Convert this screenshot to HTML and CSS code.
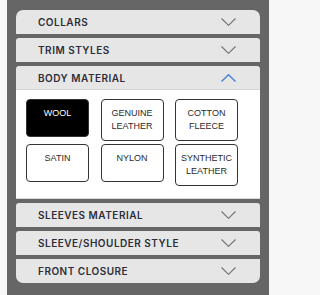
FILE: index.html
```html
<!DOCTYPE html>
<html>
<head>
<meta charset="utf-8">
<link rel="stylesheet" href="styles.css">
</head>
<body>
<div class="panel">
  <div class="acc">
    <div class="item first">
      <div class="head"><span class="title">COLLARS</span><svg class="chev" viewBox="0 0 15 8" width="15" height="8"><path d="M0.5 0.5 L7.5 7.3 L14.5 0.5"/></svg></div>
    </div>
    <div class="item">
      <div class="head"><span class="title">TRIM STYLES</span><svg class="chev" viewBox="0 0 15 8" width="15" height="8"><path d="M0.5 0.5 L7.5 7.3 L14.5 0.5"/></svg></div>
    </div>
    <div class="item open">
      <div class="head"><span class="title">BODY MATERIAL</span><svg class="chev up" viewBox="0 0 15 8" width="15" height="8"><path d="M0.5 7.5 L7.5 0.7 L14.5 7.5"/></svg></div>
      <div class="body">
        <div class="opts">
          <div class="opt sel">WOOL</div>
          <div class="opt">GENUINE<br>LEATHER</div>
          <div class="opt">COTTON<br>FLEECE</div>
          <div class="opt">SATIN</div>
          <div class="opt">NYLON</div>
          <div class="opt">SYNTHETIC<br>LEATHER</div>
        </div>
      </div>
    </div>
    <div class="item">
      <div class="head"><span class="title">SLEEVES MATERIAL</span><svg class="chev" viewBox="0 0 15 8" width="15" height="8"><path d="M0.5 0.5 L7.5 7.3 L14.5 0.5"/></svg></div>
    </div>
    <div class="item">
      <div class="head"><span class="title">SLEEVE/SHOULDER STYLE</span><svg class="chev" viewBox="0 0 15 8" width="15" height="8"><path d="M0.5 0.5 L7.5 7.3 L14.5 0.5"/></svg></div>
    </div>
    <div class="item last">
      <div class="head"><span class="title">FRONT CLOSURE</span><svg class="chev" viewBox="0 0 15 8" width="15" height="8"><path d="M0.5 0.5 L7.5 7.3 L14.5 0.5"/></svg></div>
    </div>
  </div>
</div>
</body>
</html>
```
FILE: styles.css
```css
html, body {
  margin: 0;
  padding: 0;
  background: #f7f7f7;
}
.panel {
  margin-left: 7px;
  width: 262px;
  height: 295px;
  box-sizing: border-box;
  background: #666666;
  padding: 10px 9px 0 9px;
}
.acc {
  display: flex;
  flex-direction: column;
  gap: 4px;
}
.item {
  background: #e6e6e6;
  border-radius: 3px 3px 0 0;
  overflow: hidden;
}
.item.first {
  border-radius: 7px 7px 0 0;
}
.item.last {
  border-radius: 0 0 7px 7px;
}
.head {
  height: 24px;
  display: flex;
  align-items: center;
  justify-content: space-between;
  padding: 0 24px 0 22px;
  box-sizing: border-box;
}
.open .head {
  border-bottom: 1px solid #d6d6d6;
}
.title {
  font-family: Inter, "Liberation Sans", sans-serif;
  font-weight: 600;
  font-size: 10px;
  letter-spacing: 0.5px;
  color: #2e2e3a;
}
.chev {
  display: block;
  fill: none;
  stroke: #707070;
  stroke-width: 1.1;
}
.chev.up {
  stroke: #4d7fd6;
  stroke-width: 1.4;
}
.body {
  background: #ffffff;
  border-bottom: 1px solid #d9d9d9;
  padding: 9px 10px 12px 10px;
}
.opts {
  display: grid;
  grid-template-columns: repeat(3, 63px);
  column-gap: 11.5px;
  row-gap: 3px;
  align-items: start;
}
.opt {
  box-sizing: border-box;
  min-height: 38px;
  border: 1px solid #333;
  border-radius: 4px;
  padding: 7px 2px 8px 2px;
  text-align: center;
  font-family: "Liberation Sans", Arial, sans-serif;
  font-size: 9px;
  line-height: 12.5px;
  color: #2a2a2a;
  background: #fff;
}
.opt.sel {
  background: #000;
  color: #fff;
}
```
